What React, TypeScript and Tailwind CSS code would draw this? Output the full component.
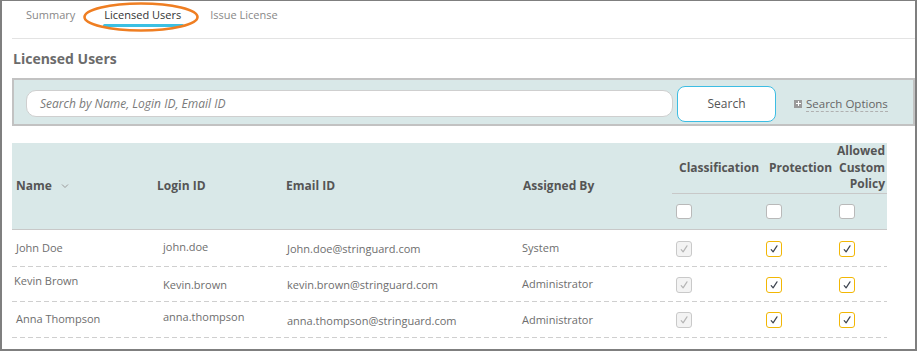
import { ReactElement } from "react";

interface Row {
  name: string;
  login: string;
  email: string;
  by: string;
  h: string;
  nameNudge: string;
  loginNudge: string;
}

const rows: Row[] = [
  { name: "John Doe", login: "john.doe", email: "John.doe@stringuard.com", by: "System", h: "h-[37px]", nameNudge: "pb-[1px] pl-[4px]", loginNudge: "pb-[3px]" },
  { name: "Kevin Brown", login: "Kevin.brown", email: "kevin.brown@stringuard.com", by: "Administrator", h: "h-[35px]", nameNudge: "pb-[6px] pl-[2px]", loginNudge: "pt-[2px]" },
  { name: "Anna Thompson", login: "anna.thompson", email: "anna.thompson@stringuard.com", by: "Administrator", h: "h-[36px]", nameNudge: "pb-[1px] pl-[4px]", loginNudge: "pb-[5px]" },
];

const cols = "grid grid-cols-[138px_130px_236px_156px_90px_71px_54px]";
const dashed =
  "bg-[repeating-linear-gradient(to_right,#cfcfcf_0,#cfcfcf_5px,transparent_5px,transparent_8px)] bg-[length:100%_1px] bg-bottom bg-no-repeat";

const Check = ({ color }: { color: string }): ReactElement => (
  <svg width="10" height="10" viewBox="0 0 10 10" className="block">
    <path d="M2.2 5.6 L4.1 7.8 L8 1.8" fill="none" stroke={color} strokeWidth="1.2" strokeLinecap="round" strokeLinejoin="round" />
  </svg>
);

const Box = ({ kind }: { kind: "empty" | "disabled" | "on" }): ReactElement => {
  if (kind === "empty") {
    return <div className="h-[15px] w-[16px] rounded-[3px] border border-[#b9b9b9] bg-white" />;
  }
  if (kind === "disabled") {
    return (
      <div className="flex h-[16px] w-[16px] items-center justify-center rounded-[3px] border border-[#c9c9c9] bg-[#f3f3f3]">
        <Check color="#b5b5b5" />
      </div>
    );
  }
  return (
    <div className="flex h-[16px] w-[16px] items-center justify-center rounded-[3px] border border-[#f2b705] bg-white">
      <Check color="#3d4450" />
    </div>
  );
};

export default function App(): ReactElement {
  return (
    <div className="relative h-[353px] w-[920px] bg-white font-['Open_Sans',sans-serif]">
      <div className="h-[351px] w-[917px] border-b-2 border-l-2 border-r-2 border-t border-[#7f7f7f] pl-[10px]">
        {/* tabs */}
        <div className="flex h-[38px] gap-[29px] border-b border-[#e3e3e3] pl-[14px] pt-[6px] text-[11px] leading-[16px] text-[#888]">
          <span>Summary</span>
          <span className="relative text-[#333]">
            Licensed Users
            <span className="absolute -left-[1px] -right-[3px] top-[17px] h-[3px] rounded-full bg-[#3cc0e3]" />
          </span>
          <span>Issue License</span>
        </div>

        <div className="flex h-[39px] items-center pl-[1px] text-[14px] font-bold text-[#6b6b6b]">Licensed Users</div>

        {/* search panel */}
        <div className="flex h-[48px] items-center border-2 border-[#c2c2c2] bg-[#d9e8e8] pl-[12px] pt-[3px]">
          <div className="flex h-[27px] w-[647px] items-center rounded-[10px] border border-[#cfcfcf] bg-white pl-[13px] text-[12px] italic text-[#7a7a7a]">
            Search by Name, Login ID, Email ID
          </div>
          <div className="ml-[4px] flex h-[36px] w-[99px] items-center justify-center rounded-[8px] border border-[#3cbde3] bg-white text-[12px] text-[#555]">
            Search
          </div>
          <div className="ml-[18px] flex items-center gap-[4px] text-[11.5px] text-[#666]">
            <span className="relative h-[8px] w-[8px] bg-[#9a9a9a]">
              <span className="absolute left-[1.5px] top-[3.5px] h-[1px] w-[5px] bg-white" />
              <span className="absolute left-[3.5px] top-[1.5px] h-[5px] w-[1px] bg-white" />
            </span>
            <span className="border-b border-dashed border-[#b0b0b0] leading-[15px]">Search Options</span>
          </div>
        </div>

        {/* table */}
        <div className="mt-[17px] w-[875px]">
          <div className={`${cols} grid-rows-[51px_35px] border-b border-[#c8c8c8] bg-[#d9e8e8] text-[12px] font-bold text-[#555]`}>
            <div className="row-span-2 flex items-center gap-[9px] pl-[4px]">
              Name
              <svg width="8" height="6" viewBox="0 0 8 6">
                <path d="M1 1.5 L4 4.5 L7 1.5" fill="none" stroke="#9a9a9a" strokeWidth="1" />
              </svg>
            </div>
            <div className="row-span-2 flex items-center pl-[7px]">Login ID</div>
            <div className="row-span-2 flex items-center pl-[6px]">Email ID</div>
            <div className="row-span-2 flex items-center pl-[7px]">Assigned By</div>
            <div className="flex items-center border-b border-[#c8c8c8] pl-[7px]">Classification</div>
            <div className="flex items-center border-b border-[#c8c8c8] pl-[7px]">Protection</div>
            <div className="flex flex-col items-end justify-center border-b border-[#c8c8c8] pr-[2px] leading-[16.5px]">
              <span>Allowed</span>
              <span>Custom</span>
              <span>Policy</span>
            </div>
            <div className="flex items-center pl-[4px]">
              <Box kind="empty" />
            </div>
            <div className="flex items-center pl-[4px]">
              <Box kind="empty" />
            </div>
            <div className="flex items-center pl-[6px]">
              <Box kind="empty" />
            </div>
          </div>

          {rows.map((r) => (
            <div key={r.name} className={`${cols} ${r.h} ${dashed} text-[11px] text-[#6e6e6e]`}>
              <div className={`flex items-center ${r.nameNudge}`}>{r.name}</div>
              <div className={`flex items-center pl-[13px] ${r.loginNudge}`}>{r.login}</div>
              <div className="flex items-center pl-[7px] pt-[2px]">{r.email}</div>
              <div className="flex items-center pl-[6px]">{r.by}</div>
              <div className="flex items-center pl-[4px]">
                <Box kind="disabled" />
              </div>
              <div className="flex items-center pl-[4px]">
                <Box kind="on" />
              </div>
              <div className="flex items-center pl-[6px]">
                <Box kind="on" />
              </div>
            </div>
          ))}
        </div>
      </div>

      {/* annotation ellipse */}
      <svg className="pointer-events-none absolute left-[82px] top-[1px]" width="120" height="33" viewBox="0 0 120 33">
        <ellipse cx="59" cy="16" rx="56.5" ry="13.5" fill="none" stroke="#ef7e22" strokeWidth="2.6" />
      </svg>
    </div>
  );
}
